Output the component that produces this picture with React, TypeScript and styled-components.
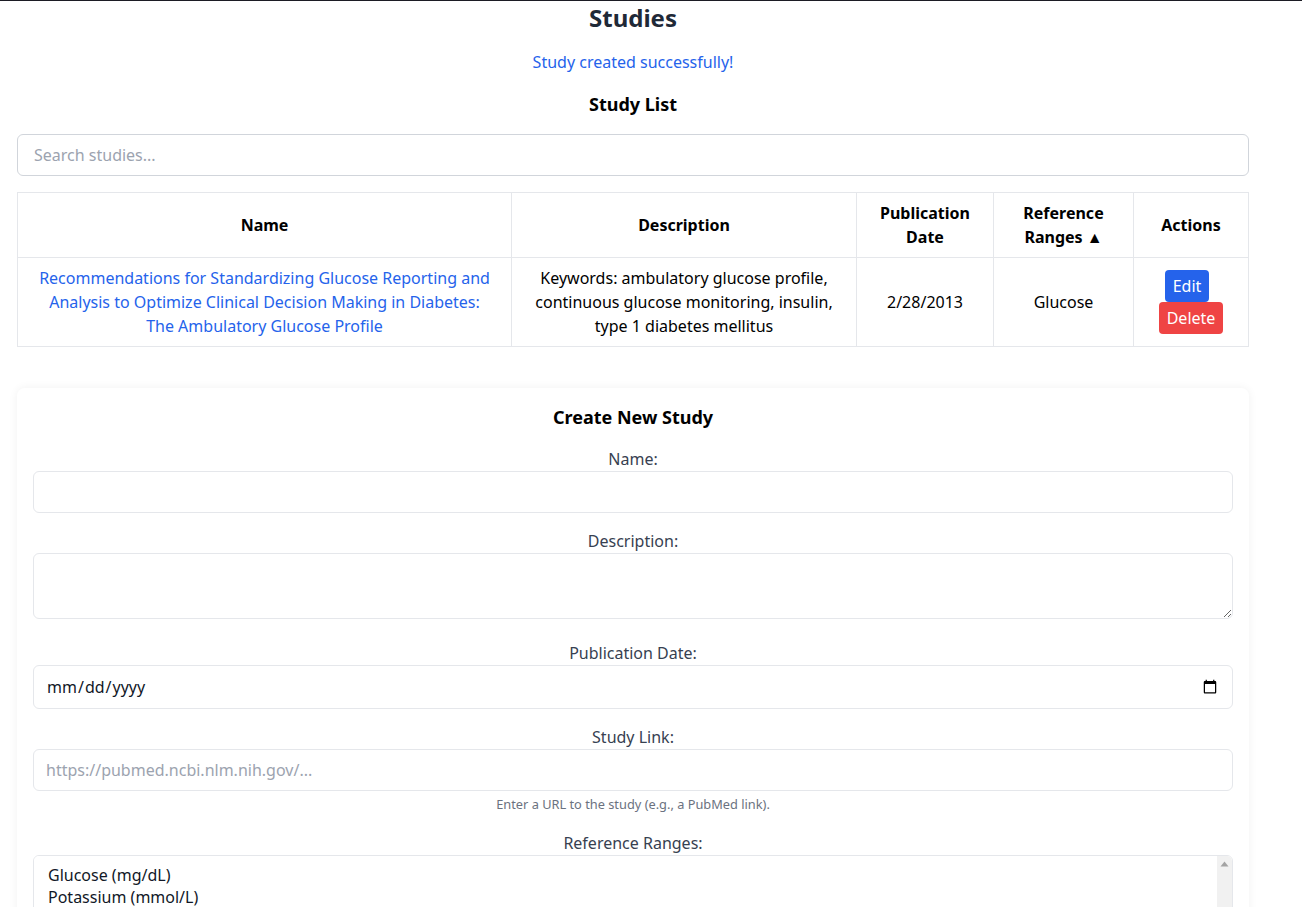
import React from "react";
import styled, { createGlobalStyle } from "styled-components";

const GlobalStyle = createGlobalStyle`
  * { box-sizing: border-box; }
  html, body { margin: 0; padding: 0; background: #ffffff; }
  body {
    border-top: 1px solid #1c1c24;
    font-family: "Noto Sans", "Open Sans", sans-serif;
    font-size: 16px;
    line-height: 24px;
    color: #111827;
  }
`;

const Page = styled.div`
  width: 1249px;
  padding: 1px 0 40px 17px;
`;

const Title = styled.h1`
  margin: 0 0 16px;
  font-size: 24px;
  line-height: 32px;
  font-weight: 700;
  text-align: center;
  color: #1f2937;
`;

const Message = styled.p`
  margin: 0 0 17px;
  text-align: center;
  color: #2563eb;
  font-size: 16px;
  line-height: 24px;
`;

const SectionTitle = styled.h2`
  margin: 0 0 16px;
  font-size: 18px;
  line-height: 27px;
  font-weight: 700;
  text-align: center;
  color: #000;
`;

const SearchInput = styled.input`
  display: block;
  width: 100%;
  height: 42px;
  padding: 8px 16px;
  border: 1px solid #d1d5db;
  border-radius: 6px;
  font-family: inherit;
  font-size: 16px;
  color: #111827;
  margin-bottom: 16px;
  &::placeholder { color: #9ca3af; }
`;

const Table = styled.table`
  width: 1231px;
  border-collapse: collapse;
  table-layout: fixed;
`;

const Th = styled.th`
  border: 1px solid #e5e7eb;
  padding: 8px 16px;
  font-weight: 700;
  text-align: center;
  vertical-align: middle;
  color: #000;
`;

const Td = styled.td`
  border: 1px solid #e5e7eb;
  padding: 8px 16px;
  text-align: center;
  vertical-align: middle;
  color: #000;
`;

const StudyLink = styled.a`
  color: #2563eb;
  text-decoration: none;
`;

const ActionButton = styled.button<{ $variant: "edit" | "delete" }>`
  display: inline-block;
  border: none;
  border-radius: 4px;
  padding: 4px 8px;
  font-family: inherit;
  font-size: 16px;
  line-height: 24px;
  color: #fff;
  cursor: pointer;
  vertical-align: top;
  background: ${(p) => (p.$variant === "edit" ? "#2563eb" : "#ef4444")};
  margin-right: ${(p) => (p.$variant === "edit" ? "8px" : "0")};
`;

const Card = styled.section`
  margin-top: 41px;
  padding: 16px;
  border-radius: 8px;
  background: #fff;
  box-shadow: 0 0 10px rgba(0, 0, 0, 0.06);
`;

const CardTitle = styled.h3`
  margin: 0 0 16px;
  font-size: 18px;
  line-height: 27px;
  font-weight: 700;
  text-align: center;
  color: #000;
`;

const Field = styled.div<{ $gap?: number }>`
  display: flex;
  flex-direction: column;
  margin-bottom: ${(p) => (p.$gap ?? 16)}px;
`;

const Label = styled.label`
  display: block;
  text-align: center;
  color: #374151;
  font-size: 16px;
  line-height: 24px;
`;

const TextInput = styled.input<{ $h?: number }>`
  display: block;
  width: 100%;
  height: ${(p) => p.$h ?? 42}px;
  padding: 8px 12px;
  border: 1px solid #e5e7eb;
  border-radius: 6px;
  font-family: inherit;
  font-size: 16px;
  color: #111827;
  background: #fff;
  &::placeholder { color: #9ca3af; }
`;

const TextArea = styled.textarea`
  display: block;
  width: 100%;
  height: 66px;
  padding: 8px 12px;
  border: 1px solid #e5e7eb;
  border-radius: 6px;
  font-family: inherit;
  font-size: 16px;
  resize: vertical;
`;

const Help = styled.small`
  display: block;
  margin-top: 4px;
  text-align: center;
  font-size: 12.8px;
  line-height: 18px;
  color: #6b7280;
`;

const SelectWrap = styled.div`
  position: relative;
`;

const MultiSelect = styled.select`
  display: block;
  width: 100%;
  height: 140px;
  padding: 8px 12px 8px 14px;
  border: 1px solid #e5e7eb;
  border-radius: 6px;
  font-family: inherit;
  font-size: 16px;
  color: #111827;
  option { padding: 0; line-height: 23px; }
`;

const ScrollTrack = styled.div`
  position: absolute;
  top: 1px;
  right: 1px;
  bottom: 1px;
  width: 15px;
  background: #f1f1f1;
  border-top-right-radius: 5px;
  border-bottom-right-radius: 5px;
  pointer-events: none;
  display: flex;
  justify-content: center;
  padding-top: 5px;
`;

export default function App() {
  const ranges = [
    "Glucose (mg/dL)",
    "Potassium (mmol/L)",
    "Sodium (mmol/L)",
    "Calcium (mg/dL)",
    "Creatinine (mg/dL)",
    "Hemoglobin A1c (%)",
    "Cholesterol (mg/dL)",
    "Triglycerides (mg/dL)",
  ];
  return (
    <>
      <GlobalStyle />
      <Page>
        <Title>Studies</Title>
        <Message>Study created successfully!</Message>
        <SectionTitle>Study List</SectionTitle>
        <SearchInput placeholder="Search studies..." />
        <Table>
          <colgroup>
            <col style={{ width: 494 }} />
            <col style={{ width: 345 }} />
            <col style={{ width: 137 }} />
            <col style={{ width: 140 }} />
            <col style={{ width: 115 }} />
          </colgroup>
          <thead>
            <tr>
              <Th>Name</Th>
              <Th>Description</Th>
              <Th>Publication Date</Th>
              <Th>Reference Ranges ▲</Th>
              <Th>Actions</Th>
            </tr>
          </thead>
          <tbody>
            <tr>
              <Td>
                <StudyLink href="#">
                  Recommendations for Standardizing Glucose Reporting and Analysis to Optimize
                  Clinical Decision Making in Diabetes: The Ambulatory Glucose Profile
                </StudyLink>
              </Td>
              <Td>
                Keywords: ambulatory glucose profile, continuous glucose monitoring, insulin,
                type 1 diabetes mellitus
              </Td>
              <Td>2/28/2013</Td>
              <Td>Glucose</Td>
              <Td>
                <ActionButton $variant="edit">Edit</ActionButton>
                <ActionButton $variant="delete">Delete</ActionButton>
              </Td>
            </tr>
          </tbody>
        </Table>

        <Card>
          <CardTitle>Create New Study</CardTitle>
          <Field>
            <Label>Name:</Label>
            <TextInput type="text" />
          </Field>
          <Field $gap={22}>
            <Label>Description:</Label>
            <TextArea />
          </Field>
          <Field>
            <Label>Publication Date:</Label>
            <TextInput type="date" $h={44} />
          </Field>
          <Field $gap={18}>
            <Label>Study Link:</Label>
            <TextInput type="url" placeholder="https://pubmed.ncbi.nlm.nih.gov/..." />
            <Help>Enter a URL to the study (e.g., a PubMed link).</Help>
          </Field>
          <Field>
            <Label>Reference Ranges:</Label>
            <SelectWrap>
              <MultiSelect multiple>
                {ranges.map((r) => (
                  <option key={r} value={r}>
                    {r}
                  </option>
                ))}
              </MultiSelect>
              <ScrollTrack aria-hidden="true">
                <svg width="9" height="6" viewBox="0 0 9 6">
                  <polygon points="0.5,5.5 8.5,5.5 4.5,0.5" fill="#a3a3a3" />
                </svg>
              </ScrollTrack>
            </SelectWrap>
          </Field>
        </Card>
      </Page>
    </>
  );
}
